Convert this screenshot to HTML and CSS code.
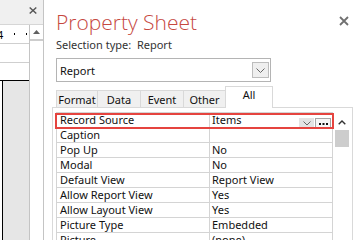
FILE: index.html
```html
<!doctype html>
<html lang="en">
    <head>
        <meta charset="UTF-8" />
        <meta name="viewport" content="width=device-width, initial-scale=1.0" />
        <title>Property Sheet</title>
        <link rel="stylesheet" href="styles.css">
    </head>
    <body>
        <div class="window">
            <aside class="doc">
                <div class="doc-bar">
                    <svg class="doc-close" width="8" height="7" viewBox="0 0 8 7">
                        <path d="M0.7 0.5 L7.3 6.5 M7.3 0.5 L0.7 6.5" stroke="#555" stroke-width="1.4" fill="none" />
                    </svg>
                </div>
                <div class="doc-body">
                    <div class="doc-canvas">
                        <div class="ruler">
                            <span class="ruler-num">4</span>
                            <span class="ruler-dot"></span>
                            <span class="ruler-dot"></span>
                        </div>
                        <div class="band"></div>
                        <div class="band band-last"></div>
                        <div class="report"><div class="report-fill"></div></div>
                    </div>
                    <div class="doc-scroll">
                        <div class="doc-scroll-up">
                            <svg width="7" height="4" viewBox="0 0 7 4"><path d="M0 4 L3.5 0 L7 4 Z" fill="#606060" /></svg>
                        </div>
                    </div>
                </div>
            </aside>

            <main class="sheet">
                <div class="sheet-head">
                    <h1>Property Sheet</h1>
                    <svg class="sheet-close" width="10" height="10" viewBox="0 0 10 10">
                        <path d="M1 1 L9 9 M9 1 L1 9" stroke="#707070" stroke-width="1.8" fill="none" />
                    </svg>
                </div>
                <div class="selection">Selection type:  Report</div>

                <div class="combo">
                    <span>Report</span>
                    <span class="combo-btn">
                        <svg width="9" height="5" viewBox="0 0 9 5"><path d="M0.5 0.5 L4.5 4.5 L8.5 0.5" stroke="#666" stroke-width="1" fill="none" /></svg>
                    </span>
                </div>

                <div class="tabs">
                    <div class="tab tab-format">Format</div>
                    <div class="tab tab-data">Data</div>
                    <div class="tab tab-event">Event</div>
                    <div class="tab tab-other">Other</div>
                    <div class="tab tab-all active">All</div>
                </div>

                <div class="panel">
                    <div class="grid">
                        <div class="props">
                            <div class="prop prop-hl">
                                <div class="prop-name">Record Source</div>
                                <div class="prop-value">
                                    <span class="prop-text">Items</span>
                                    <span class="prop-drop">
                                        <svg width="8" height="5" viewBox="0 0 8 5"><path d="M0.5 0.5 L4 4 L7.5 0.5" stroke="#666" stroke-width="1" fill="none" /></svg>
                                    </span>
                                    <span class="prop-more">
                                        <svg width="9" height="2" viewBox="0 0 9 2"><path d="M0 0 H2 V2 H0 Z M3.5 0 H5.5 V2 H3.5 Z M7 0 H9 V2 H7 Z" fill="#111" /></svg>
                                    </span>
                                </div>
                            </div>
                            <div class="prop"><div class="prop-name">Caption</div><div class="prop-value"></div></div>
                            <div class="prop"><div class="prop-name">Pop Up</div><div class="prop-value">No</div></div>
                            <div class="prop"><div class="prop-name">Modal</div><div class="prop-value">No</div></div>
                            <div class="prop"><div class="prop-name">Default View</div><div class="prop-value">Report View</div></div>
                            <div class="prop"><div class="prop-name">Allow Report View</div><div class="prop-value">Yes</div></div>
                            <div class="prop"><div class="prop-name">Allow Layout View</div><div class="prop-value">Yes</div></div>
                            <div class="prop"><div class="prop-name">Picture Type</div><div class="prop-value">Embedded</div></div>
                            <div class="prop"><div class="prop-name">Picture</div><div class="prop-value">(none)</div></div>
                        </div>
                        <div class="grid-scroll">
                            <div class="grid-scroll-up">
                                <svg width="8" height="5" viewBox="0 0 8 5"><path d="M0.7 4.3 L4 1 L7.3 4.3" stroke="#333" stroke-width="1.4" fill="none" /></svg>
                            </div>
                            <div class="grid-thumb"></div>
                        </div>
                    </div>
                </div>
            </main>
        </div>
    </body>
</html>
```

FILE: styles.css
```css
body {
    margin: 0;
    width: 360px;
    height: 240px;
    overflow: hidden;
    background-color: #fff;
    color: #111;
    font-family: "Noto Sans", "Open Sans", sans-serif;
    font-size: 11px;
}

.window {
    display: flex;
    height: 240px;
}

/* report design view on the left */

.doc {
    width: 44px;
    flex: none;
    box-sizing: border-box;
    border-right: 1px solid #c4c4c4;
    display: flex;
    flex-direction: column;
}

.doc-bar {
    height: 25px;
    flex: none;
    box-sizing: border-box;
    background-color: #f0f0f0;
    border-bottom: 1px solid #d6d6d6;
    display: flex;
    justify-content: flex-end;
    padding: 7px 6px 0 0;
}

.doc-body {
    flex: 1;
    display: flex;
}

.doc-canvas {
    width: 29px;
    display: flex;
    flex-direction: column;
}

.ruler {
    height: 18px;
    flex: none;
    border-bottom: 1px solid #cfcfcf;
    display: flex;
    align-items: center;
    font-size: 11px;
    color: #000;
}

.ruler-num {
    margin-left: -3px;
    line-height: 1;
}

.ruler-dot {
    width: 1px;
    height: 2px;
    margin-left: 11px;
    background-color: #000;
}

.band {
    height: 18px;
    flex: none;
    border-bottom: 1px solid #cfcfcf;
}

.band-last {
    height: 17px;
    border-bottom: 1px solid #000;
}

.report {
    flex: 1;
    display: flex;
    padding-left: 2px;
}

.report-fill {
    flex: 1;
    border-left: 1px solid #000;
    background-color: #e6e6e6;
}

.doc-scroll {
    width: 13px;
    border-left: 1px solid #c4c4c4;
}

.doc-scroll-up {
    height: 14px;
    border-bottom: 2px solid #cdcdcd;
    display: flex;
    align-items: center;
    justify-content: center;
}

/* property sheet */

.sheet {
    flex: 1;
    display: flex;
    flex-direction: column;
    padding-left: 12px;
    min-width: 0;
}

.sheet > * {
    flex: none;
}

.sheet-head {
    display: flex;
    justify-content: space-between;
    align-items: flex-start;
    padding: 10px 11px 0 0;
}

.sheet-head h1 {
    margin: 0;
    font-family: "Open Sans", "Noto Sans", sans-serif;
    font-weight: 300;
    font-size: 21px;
    line-height: 24px;
    color: #c6483f;
}

.sheet-close {
    margin-top: 6px;
}

.selection {
    margin-top: 4px;
    line-height: 14px;
    color: #333;
    white-space: pre;
}

.combo {
    margin-top: 6px;
    width: 215px;
    height: 24px;
    box-sizing: border-box;
    border: 1px solid #b4b4b4;
    display: flex;
    align-items: center;
    justify-content: space-between;
    padding: 0 1px 0 3px;
}

.combo-btn {
    width: 17px;
    height: 16px;
    box-sizing: border-box;
    border: 1px solid #bdbdbd;
    background-color: #efefef;
    display: flex;
    align-items: center;
    justify-content: center;
}

.tabs {
    margin-top: 4px;
    height: 21px;
    display: flex;
    align-items: flex-end;
}

.tab {
    height: 17px;
    box-sizing: border-box;
    border: 1px solid #d9d9d9;
    border-bottom: none;
    background-color: #f0f0f0;
    padding-top: 2px;
    line-height: 14px;
    text-align: center;
    margin-left: -1px;
}

.tab-format {
    width: 42px;
    margin-left: 0;
}

.tab-data,
.tab-event {
    width: 44px;
}

.tab-other {
    width: 43px;
}

.tab-all {
    width: 48px;
}

.tab.active {
    position: relative;
    height: 22px;
    margin-bottom: -1px;
    padding-top: 1px;
    background-color: #fff;
}

.panel {
    flex: 1 0 auto;
    margin: 0 7px 0 -4px;
    border: 1px solid #d9d9d9;
    border-bottom: none;
    padding: 4px 0 0 3px;
}

.grid {
    display: flex;
}

.props {
    width: 277px;
    flex: none;
    box-sizing: border-box;
    border: 1px solid #d4d4d4;
    border-bottom: none;
}

.prop {
    display: grid;
    grid-template-columns: 153px 1fr;
    height: 15px;
    box-sizing: border-box;
    border-bottom: 1px solid #d4d4d4;
    line-height: 14px;
    white-space: nowrap;
}

.prop-name {
    padding-left: 3px;
    border-right: 1px solid #d4d4d4;
    overflow: hidden;
}

.prop-value {
    padding-left: 2px;
    display: flex;
    overflow: hidden;
}

.prop-text {
    flex: 1;
}

.prop-hl {
    position: relative;
}

.prop-hl::after {
    content: "";
    position: absolute;
    top: 0;
    left: -2px;
    right: -2px;
    bottom: -2px;
    border: 2px solid #e5443f;
}

.prop-drop,
.prop-more {
    align-self: flex-end;
    height: 11px;
    margin-bottom: -2px;
    box-sizing: border-box;
    display: flex;
    align-items: center;
    justify-content: center;
}

.prop-drop {
    width: 15px;
    margin-right: 1px;
    background-color: #e3e3e3;
}

.prop-more {
    width: 16px;
    margin-right: 1px;
    border: 1px solid #a6a6a6;
    background-color: #f6f6f6;
}

.grid-scroll {
    flex: 1;
    padding: 0 3px 0 2px;
}

.grid-scroll-up {
    height: 18px;
    box-sizing: border-box;
    padding-top: 3px;
    display: flex;
    align-items: center;
    justify-content: center;
}

.grid-thumb {
    height: 17px;
    background-color: #cdcdcd;
}
```
